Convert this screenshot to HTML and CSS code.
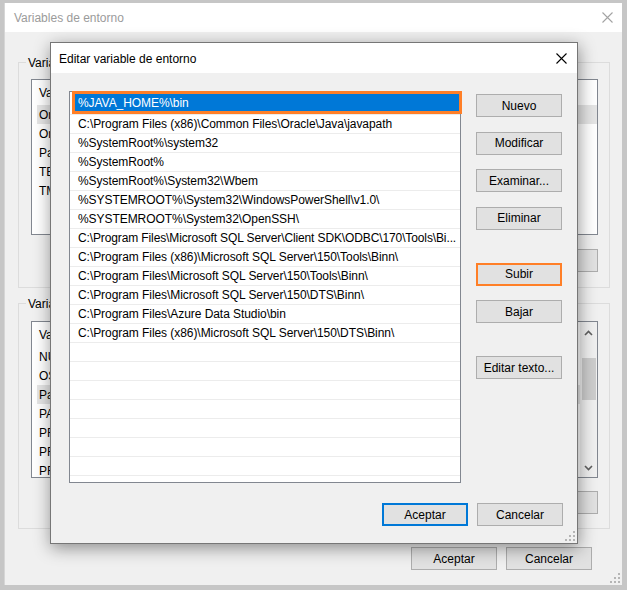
FILE: index.html
```html
<!DOCTYPE html>
<html lang="es">
<head>
<meta charset="utf-8">
<title>Variables de entorno</title>
<link rel="stylesheet" href="styles.css">
</head>
<body>
<div class="window outer">
  <div class="titlebar inactive">
    <span class="title">Variables de entorno</span>
    <svg class="close" width="11" height="11" viewBox="0 0 11 11"><path d="M0.5 0.5L10.5 10.5M10.5 0.5L0.5 10.5" stroke="#a3a3a3" stroke-width="1.1"/></svg>
  </div>
  <div class="outer-body">
    <div class="group g1">
      <span class="group-title">Variables de usuario para Usuario</span>
      <div class="listview lv1">
        <div class="lv-header"><span class="c1">Variable</span><span class="c2">Valor</span></div>
        <div class="lv-row hl"><span class="c1">OneDrive</span><span class="c2">C:\Users\Usuario\OneDrive</span></div>
        <div class="lv-row"><span class="c1">OneDriveConsumer</span><span class="c2">C:\Users\Usuario\OneDrive</span></div>
        <div class="lv-row"><span class="c1">Path</span><span class="c2">%USERPROFILE%\AppData\Local\Microsoft\WindowsApps;</span></div>
        <div class="lv-row"><span class="c1">TEMP</span><span class="c2">%USERPROFILE%\AppData\Local\Temp</span></div>
        <div class="lv-row"><span class="c1">TMP</span><span class="c2">%USERPROFILE%\AppData\Local\Temp</span></div>
      </div>
      <div class="group-buttons">
        <button class="btn">Nuevo...</button>
        <button class="btn">Editar...</button>
        <button class="btn">Eliminar</button>
      </div>
    </div>
    <div class="group g2">
      <span class="group-title">Variables del sistema</span>
      <div class="listview lv2">
        <div class="lv-content">
          <div class="lv-header"><span class="c1">Variable</span><span class="c2">Valor</span></div>
          <div class="lv-row"><span class="c1">NUMBER_OF_PROCESSORS</span><span class="c2">8</span></div>
          <div class="lv-row"><span class="c1">OS</span><span class="c2">Windows_NT</span></div>
          <div class="lv-row hl"><span class="c1">Path</span><span class="c2">C:\Program Files (x86)\Common Files\Oracle\Java\javapath;</span></div>
          <div class="lv-row"><span class="c1">PATHEXT</span><span class="c2">.COM;.EXE;.BAT;.CMD;.VBS;.VBE;.JS;.JSE;.WSF;.WSH;.MSC</span></div>
          <div class="lv-row"><span class="c1">PROCESSOR_ARCHITECTURE</span><span class="c2">AMD64</span></div>
          <div class="lv-row"><span class="c1">PROCESSOR_IDENTIFIER</span><span class="c2">Intel64 Family 6 Model 142</span></div>
          <div class="lv-row"><span class="c1">PROCESSOR_LEVEL</span><span class="c2">6</span></div>
        </div>
        <div class="vscroll">
          <svg class="arrow" width="9" height="6" viewBox="0 0 9 6"><path d="M1 5L4.5 1.5L8 5" fill="none" stroke="#606060" stroke-width="1.6"/></svg>
          <div class="track"><div class="thumb"></div></div>
          <svg class="arrow" width="9" height="6" viewBox="0 0 9 6"><path d="M1 1L4.5 4.5L8 1" fill="none" stroke="#606060" stroke-width="1.6"/></svg>
        </div>
      </div>
      <div class="group-buttons">
        <button class="btn">Nueva...</button>
        <button class="btn">Editar...</button>
        <button class="btn">Eliminar</button>
      </div>
    </div>
    <div class="footer-buttons outer-footer">
      <button class="btn">Aceptar</button>
      <button class="btn">Cancelar</button>
    </div>
    <svg class="grip outer-grip" width="10" height="10" viewBox="0 0 10 10" fill="#b5b5b5"><rect x="8" y="0" width="2" height="2"/><rect x="4" y="4" width="2" height="2"/><rect x="8" y="4" width="2" height="2"/><rect x="0" y="8" width="2" height="2"/><rect x="4" y="8" width="2" height="2"/><rect x="8" y="8" width="2" height="2"/></svg>
  </div>

  <div class="dialog">
    <div class="titlebar active">
      <span class="title">Editar variable de entorno</span>
      <svg class="close" width="11" height="11" viewBox="0 0 11 11"><path d="M0.5 0.5L10.5 10.5M10.5 0.5L0.5 10.5" stroke="#000" stroke-width="1.1"/></svg>
    </div>
    <div class="dialog-body">
      <div class="dlg-main">
        <div class="pathlist">
          <div class="path-row selected"><span class="path-text">%JAVA_HOME%\bin</span></div>
          <div class="path-row"><span class="path-text">C:\Program Files (x86)\Common Files\Oracle\Java\javapath</span></div>
          <div class="path-row"><span class="path-text">%SystemRoot%\system32</span></div>
          <div class="path-row"><span class="path-text">%SystemRoot%</span></div>
          <div class="path-row"><span class="path-text">%SystemRoot%\System32\Wbem</span></div>
          <div class="path-row"><span class="path-text">%SYSTEMROOT%\System32\WindowsPowerShell\v1.0\</span></div>
          <div class="path-row"><span class="path-text">%SYSTEMROOT%\System32\OpenSSH\</span></div>
          <div class="path-row"><span class="path-text tight">C:\Program Files\Microsoft SQL Server\Client SDK\ODBC\170\Tools\Bi...</span></div>
          <div class="path-row"><span class="path-text">C:\Program Files (x86)\Microsoft SQL Server\150\Tools\Binn\</span></div>
          <div class="path-row"><span class="path-text">C:\Program Files\Microsoft SQL Server\150\Tools\Binn\</span></div>
          <div class="path-row"><span class="path-text">C:\Program Files\Microsoft SQL Server\150\DTS\Binn\</span></div>
          <div class="path-row"><span class="path-text">C:\Program Files\Azure Data Studio\bin</span></div>
          <div class="path-row"><span class="path-text">C:\Program Files (x86)\Microsoft SQL Server\150\DTS\Binn\</span></div>
          <div class="path-row"></div>
          <div class="path-row"></div>
          <div class="path-row"></div>
          <div class="path-row"></div>
          <div class="path-row"></div>
          <div class="path-row"></div>
          <div class="path-row"></div>
        </div>
        <div class="side-buttons">
          <button class="btn">Nuevo</button>
          <button class="btn">Modificar</button>
          <button class="btn">Examinar...</button>
          <button class="btn">Eliminar</button>
          <button class="btn highlight gap-before">Subir</button>
          <button class="btn">Bajar</button>
          <button class="btn gap-before">Editar texto...</button>
        </div>
      </div>
      <div class="footer-buttons dlg-footer">
        <button class="btn default">Aceptar</button>
        <button class="btn">Cancelar</button>
      </div>
    </div>
    <svg class="grip dlg-grip" width="10" height="10" viewBox="0 0 10 10" fill="#b5b5b5"><rect x="8" y="0" width="2" height="2"/><rect x="4" y="4" width="2" height="2"/><rect x="8" y="4" width="2" height="2"/><rect x="0" y="8" width="2" height="2"/><rect x="4" y="8" width="2" height="2"/><rect x="8" y="8" width="2" height="2"/></svg>
  </div>
</div>
</body>
</html>
```

FILE: styles.css
```css
* { box-sizing: border-box; }

html, body {
  margin: 0;
  padding: 0;
}

body {
  width: 627px;
  height: 590px;
  background: #c6c6c6;
  font-family: "Liberation Sans", Arial, sans-serif;
  font-size: 12px;
  color: #000;
  overflow: hidden;
  padding: 3px 0 0 4px;
}

.window {
  position: relative;
  background: #f0f0f0;
}

.outer {
  width: 618px;
  height: 582px;
  display: flex;
  flex-direction: column;
  border-left: 1px solid #d6d6d6;
}

.titlebar {
  display: flex;
  align-items: center;
  justify-content: space-between;
  background: #fff;
  flex: none;
}

.outer > .titlebar {
  height: 29px;
  padding: 0 9px 0 9px;
}

.inactive .title { color: #9b9b9b; }

.outer-body {
  position: relative;
  flex: 1;
  padding: 30px 12px 15px 13px;
  display: flex;
  flex-direction: column;
}

.group {
  position: relative;
  border: 1px solid #dcdcdc;
  padding: 16px 11px 15px 12px;
  display: flex;
  flex-direction: column;
}

.g2 {
  margin-top: 15px;
  padding: 17px 11px 14px 12px;
}

.group-title {
  position: absolute;
  top: -7px;
  left: 7px;
  padding: 0 2px;
  background: #f0f0f0;
  line-height: 15px;
}

.listview {
  background: #fff;
  border: 1px solid #828790;
  overflow: hidden;
}

.lv1 {
  height: 156px;
}

.lv2 {
  height: 157px;
  display: flex;
}

.lv-content {
  flex: 1;
  overflow: hidden;
}

.lv-header {
  height: 25px;
  display: flex;
  align-items: center;
  padding-left: 7px;
  white-space: nowrap;
}

.lv-header .c1 {
  width: 170px;
  border-right: 1px solid #e5e5e5;
}

.lv-header .c2 { padding-left: 6px; }

.lv-row {
  height: 19px;
  margin-left: 5px;
  display: flex;
  align-items: center;
  padding-left: 2px;
  white-space: nowrap;
}

.lv-row .c1 { width: 170px; }
.lv-row .c2 { padding-left: 6px; }

.lv-row.hl { background: #e5e5e5; }

.vscroll {
  width: 17px;
  flex: none;
  background: #f0f0f0;
  display: flex;
  flex-direction: column;
  align-items: center;
  padding: 8px 0 6px;
}

.track {
  flex: 1;
  width: 100%;
  padding: 22px 1px 0 2px;
}

.thumb {
  height: 42px;
  background: #cdcdcd;
}

.group-buttons {
  display: flex;
  justify-content: flex-end;
  gap: 9px;
  margin-top: 14px;
}

.g2 .group-buttons { margin-top: 13px; }

.btn {
  font-family: inherit;
  font-size: 12px;
  color: #000;
  background: #e1e1e1;
  border: 1px solid #adadad;
  height: 23px;
  width: 86px;
  padding: 0;
  margin: 0;
  flex: none;
}

.footer-buttons {
  display: flex;
  justify-content: flex-end;
  gap: 9px;
}

.outer-footer {
  margin-top: 18px;
  padding-right: 18px;
}

.grip {
  position: absolute;
  right: 2px;
  bottom: 2px;
}

/* dialog over the outer window */
.dialog {
  position: absolute;
  left: 45px;
  top: 39px;
  width: 528px;
  height: 502px;
  background: #f0f0f0;
  border: 1px solid #767676;
  display: flex;
  flex-direction: column;
  box-shadow: 1px 4px 16px rgba(0, 0, 0, 0.42);
}

.dialog > .titlebar {
  height: 30px;
  padding: 1px 10px 0 8px;
}

.dialog-body {
  flex: 1;
  padding: 18px 14px 15px 18px;
  display: flex;
  flex-direction: column;
}

.dlg-main {
  display: flex;
  gap: 15px;
}

.pathlist {
  width: 392px;
  height: 392px;
  background: #fff;
  border: 1px solid #828790;
  padding-top: 4px;
  letter-spacing: -0.06px;
}

.path-row {
  height: 19px;
  border-bottom: 1px solid #ececec;
  padding: 0 1px 0 5px;
  display: flex;
  align-items: stretch;
  white-space: nowrap;
}

.path-text {
  flex: 1;
  padding-left: 3px;
  display: flex;
  align-items: center;
  overflow: hidden;
}

.path-text.tight {
  letter-spacing: -0.12px;
}

.path-row.selected .path-text {
  margin: -2px 0 3px;
  background: #0078d7;
  color: #fff;
  outline: 3px solid #ff7f27;
  outline-offset: 0px;
}

.side-buttons {
  display: flex;
  flex-direction: column;
  gap: 14.5px;
  padding-top: 3px;
}

.btn.highlight {
  border: 2px solid #ff7f27;
}

.gap-before { margin-top: 18.5px; }

.dlg-footer {
  margin-top: 20px;
  gap: 9px;
}

.btn.default {
  border: 2px solid #0078d7;
}

.dlg-grip {
  right: 2px;
  bottom: 2px;
}
```
